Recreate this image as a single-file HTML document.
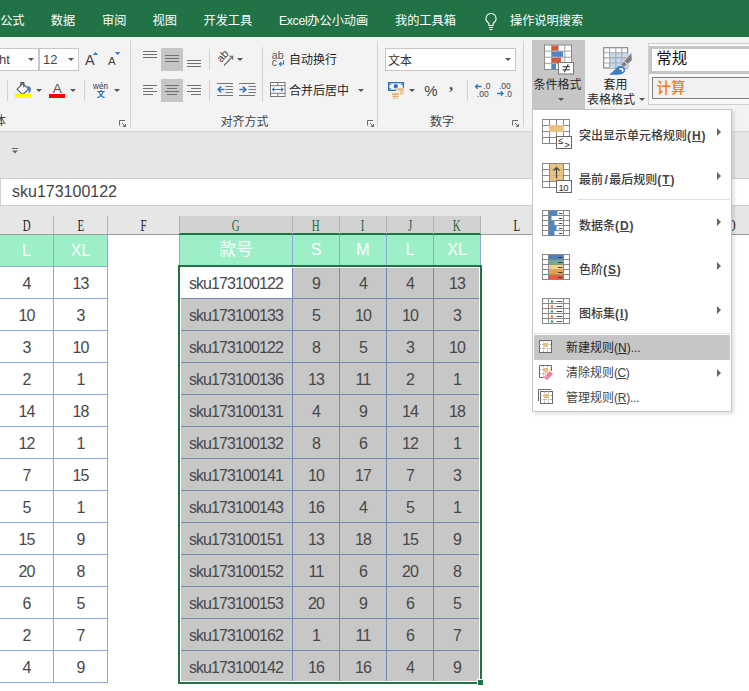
<!DOCTYPE html>
<html lang="zh-CN"><head><meta charset="utf-8"><title>Excel</title>
<style>
html,body{margin:0;padding:0}
body{width:749px;height:691px;position:relative;overflow:hidden;background:#fff;font-family:"Liberation Sans","Noto Sans CJK SC",sans-serif;color:#262626}
.a{position:absolute}
.t{position:absolute;white-space:nowrap}
.tab{position:absolute;top:11.300px;height:20px;line-height:20px;font-size:12.200px;color:#fff;white-space:nowrap}
.rl{position:absolute;font-size:12px;color:#262626;white-space:nowrap;line-height:16px}
.grp{position:absolute;font-size:12px;color:#444;white-space:nowrap;line-height:16px}
.vs{position:absolute;width:1px;background:#d2d2d2}
.ch{position:absolute;top:216px;height:18px;line-height:20px;text-align:center;font-family:"Liberation Serif","Noto Serif CJK SC",serif;font-size:16px;color:#222}
.ch span{display:inline-block;transform:scaleX(.68)}
.hd{position:absolute;top:235px;height:31px;line-height:31px;text-align:center;color:#fff;font-size:16px;background:#9cefc6}
.c{position:absolute;padding-top:.5px;height:32px;line-height:32px;text-align:center;font-size:16px;color:#484848;letter-spacing:-0.9px;white-space:nowrap}
.mi{position:absolute;left:579px;font-size:12px;font-weight:500;color:#3c3c3c;white-space:nowrap;line-height:16px}
.mi b{font-weight:bold;letter-spacing:.9px;color:#444}
.ms{position:absolute;left:566px;font-size:12px;color:#444;white-space:nowrap;line-height:16px}
.arr{position:absolute;width:0;height:0;border-left:4px solid #666;border-top:4px solid transparent;border-bottom:4px solid transparent}
.dd{position:absolute;width:0;height:0;border-top:3px solid #555;border-left:3px solid transparent;border-right:3px solid transparent}
u{text-decoration:underline}
</style></head><body>

<div class="a" style="left:0;top:0;width:749px;height:37px;background:#217346"></div>
<div class="tab" style="left:0.2px">公式</div>
<div class="tab" style="left:50.8px">数据</div>
<div class="tab" style="left:102px">审阅</div>
<div class="tab" style="left:152.5px">视图</div>
<div class="tab" style="left:203.5px">开发工具</div>
<div class="tab" style="left:279px"><span style="letter-spacing:-0.3px">Excel</span>办公小动画</div>
<div class="tab" style="left:395px">我的工具箱</div>
<div class="tab" style="left:510px">操作说明搜索</div>
<svg class="a" style="left:483px;top:12px" width="16" height="20" viewBox="0 0 16 20"><path d="M8 1.5a5 5 0 0 0-3 9c.6.6 1 1.300 1 2.200v.8h4v-.8c0-.9.4-1.600 1-2.200a5 5 0 0 0-3-9z" fill="none" stroke="#fff" stroke-width="1.100"/><path d="M6 15.500h4M6.500 17.500h3" stroke="#fff" stroke-width="1.100" fill="none"/></svg>
<div class="a" style="left:0;top:37px;width:749px;height:94px;background:#f3f3f3"></div>
<div class="a" style="left:0;top:131px;width:749px;height:48px;background:#e6e6e6"></div>
<div class="a" style="left:0;top:131px;width:749px;height:1px;background:#d6d6d6"></div>
<div class="a" style="left:-10px;top:48px;width:47px;height:21px;background:#fff;border:1px solid #c6c6c6;box-sizing:content-box"></div>
<div class="t" style="left:-1px;top:50.700px;font-size:13px;line-height:18px;color:#444">ht</div>
<div class="dd" style="left:28px;top:58px"></div>
<div class="a" style="left:39px;top:48px;width:38px;height:21px;background:#fff;border:1px solid #c6c6c6"></div>
<div class="t" style="left:43px;top:50.700px;font-size:13px;line-height:18px;color:#444">12</div>
<div class="dd" style="left:68px;top:58px"></div>
<div class="t" style="left:85px;top:51px;font-size:14.500px;line-height:18px;color:#444">A</div>
<svg class="a" style="left:92px;top:51px" width="8" height="5" viewBox="0 0 8 5"><path d="M0.800 4L3.500 1 6.200 4z" fill="#2b79c2"/></svg>
<div class="t" style="left:108px;top:53.300px;font-size:11.500px;line-height:16px;color:#444">A</div>
<svg class="a" style="left:114px;top:51px" width="8" height="5" viewBox="0 0 8 5"><path d="M0.800 1L3.600 4 6.400 1z" fill="#2b79c2"/></svg>
<div class="vs" style="left:7px;top:80px;height:21px"></div>
<svg class="a" style="left:14px;top:80px" width="20" height="20" viewBox="0 0 20 20"><path d="M13.200 5.800C16 6.500 17.600 8.500 16.800 10.500 16.300 12 15.300 13 14.300 13.600 15 11.500 15 9 13.200 5.800z" fill="#3d7ebf"/><path d="M3 9.300L8.700 3.600 14.600 9.200 8.700 14.500z" fill="#fff" stroke="#555" stroke-width="1.100"/><path d="M6.800 6V2.600h3V7.500" fill="none" stroke="#555" stroke-width="1.100"/><rect x="0.900" y="13.900" width="16.200" height="4" fill="#ffff00"/></svg>
<div class="dd" style="left:36px;top:89px"></div>
<div class="t" style="left:52.800px;top:80.300px;font-size:13.500px;line-height:18px;color:#555">A</div>
<div class="a" style="left:49px;top:94px;width:16px;height:3.500px;background:#ff0000"></div>
<div class="dd" style="left:70px;top:89px"></div>
<div class="vs" style="left:84px;top:80px;height:21px"></div>
<div class="t" style="left:93px;top:82px;font-size:8.200px;line-height:10px;color:#333">wén</div>
<div class="t" style="left:96.800px;top:88.600px;font-size:8.200px;line-height:12px;color:#2b6cb8;font-weight:bold">文</div>
<div class="dd" style="left:113.700px;top:89px"></div>
<div class="grp" style="left:-6px;top:113px">体</div>
<svg class="a" style="left:119px;top:120px" width="7" height="7" viewBox="0 0 7 7"><path d="M0.500 5.500V0.500H6" fill="none" stroke="#6a6a6a" stroke-width="1"/><path d="M3 3L6 6" fill="none" stroke="#6a6a6a" stroke-width="1"/><path d="M7 3.500V7H3.500z" fill="#6a6a6a"/></svg>
<div class="vs" style="left:130px;top:41px;height:86px"></div>
<div class="a" style="left:161px;top:48px;width:22px;height:23px;background:#c6c6c6"></div>
<div class="a" style="left:161px;top:79px;width:22px;height:23px;background:#c6c6c6"></div>
<div class="a" style="left:143px;top:51px;width:14px;height:1px;background:#707070"></div><div class="a" style="left:143px;top:54px;width:14px;height:1px;background:#707070"></div><div class="a" style="left:143px;top:57px;width:14px;height:1px;background:#707070"></div>
<div class="a" style="left:165px;top:55px;width:14px;height:1px;background:#707070"></div><div class="a" style="left:165px;top:58px;width:14px;height:1px;background:#707070"></div><div class="a" style="left:165px;top:61px;width:14px;height:1px;background:#707070"></div>
<div class="a" style="left:187px;top:60px;width:14px;height:1px;background:#707070"></div><div class="a" style="left:187px;top:63px;width:14px;height:1px;background:#707070"></div><div class="a" style="left:187px;top:66px;width:14px;height:1px;background:#707070"></div>
<div class="a" style="left:143px;top:85px;width:14px;height:1px;background:#707070"></div><div class="a" style="left:143px;top:88px;width:10px;height:1px;background:#707070"></div><div class="a" style="left:143px;top:91px;width:14px;height:1px;background:#707070"></div><div class="a" style="left:143px;top:94px;width:10px;height:1px;background:#707070"></div>
<div class="a" style="left:165.0px;top:85px;width:14px;height:1px;background:#707070"></div><div class="a" style="left:167.0px;top:88px;width:10px;height:1px;background:#707070"></div><div class="a" style="left:165.0px;top:91px;width:14px;height:1px;background:#707070"></div><div class="a" style="left:167.0px;top:94px;width:10px;height:1px;background:#707070"></div>
<div class="a" style="left:187px;top:85px;width:14px;height:1px;background:#707070"></div><div class="a" style="left:191px;top:88px;width:10px;height:1px;background:#707070"></div><div class="a" style="left:187px;top:91px;width:14px;height:1px;background:#707070"></div><div class="a" style="left:191px;top:94px;width:10px;height:1px;background:#707070"></div>
<div class="vs" style="left:209px;top:49px;height:21px"></div>
<div class="vs" style="left:209px;top:80px;height:21px"></div>
<svg class="a" style="left:214px;top:48px" width="22" height="20" viewBox="0 0 22 20"><text x="0" y="0" font-size="10.800" font-family="Liberation Sans,sans-serif" fill="#444" transform="translate(7.200 15) rotate(-48)">ab</text><path d="M10 17.500L18.500 8.500" stroke="#666" stroke-width="1.100" fill="none"/><path d="M15.300 8.300h3.400v3.400" fill="none" stroke="#666" stroke-width="1.100"/></svg>
<div class="dd" style="left:236.500px;top:58px"></div>
<svg class="a" style="left:217px;top:83px" width="18" height="15" viewBox="0 0 18 15"><path d="M0 0.500h16M8.500 3.500h7.500M8.500 6.500h7.500M8.500 9.500h7.500M0 12.500h16" stroke="#777" stroke-width="1" fill="none"/><path d="M1.200 6.500h6.300M4.200 3.500L1.200 6.500l3 3" stroke="#3b74ba" stroke-width="1.700" fill="none"/></svg>
<svg class="a" style="left:239px;top:83px" width="18" height="15" viewBox="0 0 18 15"><path d="M0 0.500h16M9.500 3.500h7.500M9.500 6.500h7.500M9.500 9.500h7.500M0 12.500h16" stroke="#777" stroke-width="1" fill="none"/><path d="M0.500 6.500h6.300M3.800 3.500l3 3-3 3" stroke="#3b74ba" stroke-width="1.700" fill="none"/></svg>
<div class="vs" style="left:262px;top:47px;height:55px"></div>
<div class="t" style="left:271.800px;top:49.500px;font-size:10.500px;line-height:10px;color:#555">ab</div>
<div class="t" style="left:271.800px;top:57.300px;font-size:10.500px;line-height:10px;color:#555">c</div>
<svg class="a" style="left:278px;top:60px" width="7" height="7" viewBox="0 0 7 7"><path d="M5.500 0.500v3.500H1.500M3.300 2L1.300 4l2 2" stroke="#2b79c2" stroke-width="1.100" fill="none"/></svg>
<div class="rl" style="left:289px;top:52px">自动换行</div>
<svg class="a" style="left:270px;top:82px" width="16" height="15" viewBox="0 0 16 15"><rect x="0.500" y="0.500" width="14.500" height="14" fill="#fff" stroke="#777"/><path d="M0.500 3.700h14.500M0.500 11.300h14.500M7.750 0.500v3.200M7.750 11.300v3.200" stroke="#777" fill="none"/><path d="M2.500 7.500h10.500M4.300 5.700L2.500 7.500l1.800 1.800M11.200 5.700l1.800 1.800-1.800 1.800" stroke="#3b74ba" stroke-width="1.100" fill="none"/></svg>
<div class="rl" style="left:289px;top:82.500px">合并后居中</div>
<div class="dd" style="left:358px;top:89px"></div>
<div class="grp" style="left:220.500px;top:114px">对齐方式</div>
<svg class="a" style="left:367px;top:120px" width="7" height="7" viewBox="0 0 7 7"><path d="M0.500 5.500V0.500H6" fill="none" stroke="#6a6a6a" stroke-width="1"/><path d="M3 3L6 6" fill="none" stroke="#6a6a6a" stroke-width="1"/><path d="M7 3.500V7H3.500z" fill="#6a6a6a"/></svg>
<div class="vs" style="left:377px;top:41px;height:86px"></div>
<div class="a" style="left:385px;top:48px;width:129px;height:21px;background:#fff;border:1px solid #c6c6c6"></div>
<div class="t" style="left:388px;top:52.500px;font-size:12px;line-height:16px;color:#333">文本</div>
<div class="dd" style="left:505px;top:58px"></div>
<svg class="a" style="left:387px;top:81px" width="18" height="18" viewBox="0 0 18 18"><rect x="1.700" y="1.700" width="14.700" height="7.600" fill="#fff" stroke="#3572b5" stroke-width="1.400"/><circle cx="8.800" cy="5.300" r="2.200" fill="#3572b5"/><path d="M2.400 2.400h1.800a1.800 1.800 0 0 1-1.800 1.800zM2.400 8.600v-1.800a1.800 1.800 0 0 1 1.800 1.800zM15.700 2.400v1.800a1.800 1.800 0 0 1-1.800-1.800z" fill="#3572b5"/><rect x="9.300" y="6.700" width="8.200" height="8" fill="#f3f3f3"/><rect x="4.500" y="11.300" width="8" height="6.500" fill="#f3f3f3"/><g fill="#e9b562"><rect x="10" y="7.300" width="7" height="2.300" rx="1.100"/><rect x="12.500" y="10.300" width="4.500" height="1.300" rx=".6"/><rect x="13" y="12.300" width="3.500" height="1.300" rx=".6"/><rect x="5" y="12" width="7" height="2.300" rx="1.100"/><rect x="5.200" y="14.800" width="6.600" height="1.200" rx=".6"/><rect x="5.800" y="16.400" width="5.400" height="1.200" rx=".6"/></g></svg>
<div class="dd" style="left:409px;top:89px"></div>
<div class="t" style="left:424.300px;top:81.800px;font-size:15px;line-height:18px;color:#444">%</div>
<div class="t" style="left:449px;top:74.500px;font-size:17px;line-height:20px;color:#555;font-family:'Liberation Serif',serif;font-weight:bold">,</div>
<div class="vs" style="left:467px;top:80px;height:21px"></div>
<svg class="a" style="left:474px;top:82px" width="17" height="17" viewBox="0 0 17 17"><text x="9.300" y="7.200" font-size="8.500" font-family="Liberation Sans,sans-serif" fill="#444">.0</text><text x="3" y="14.700" font-size="8.500" font-family="Liberation Sans,sans-serif" fill="#444">.00</text><path d="M1.500 4.500h6M3.700 2.300L1.500 4.500l2.200 2.200" stroke="#2b79c2" stroke-width="1.300" fill="none"/></svg>
<svg class="a" style="left:496px;top:82px" width="17" height="17" viewBox="0 0 17 17"><text x="3" y="7.200" font-size="8.500" font-family="Liberation Sans,sans-serif" fill="#444">.00</text><text x="8.800" y="14.700" font-size="8.500" font-family="Liberation Sans,sans-serif" fill="#444">.0</text><path d="M1 11.500h6M4.800 9.300l2.200 2.200-2.200 2.200" stroke="#2b79c2" stroke-width="1.300" fill="none"/></svg>
<div class="grp" style="left:430px;top:113.500px">数字</div>
<svg class="a" style="left:512px;top:120px" width="7" height="7" viewBox="0 0 7 7"><path d="M0.500 5.500V0.500H6" fill="none" stroke="#6a6a6a" stroke-width="1"/><path d="M3 3L6 6" fill="none" stroke="#6a6a6a" stroke-width="1"/><path d="M7 3.500V7H3.500z" fill="#6a6a6a"/></svg>
<div class="vs" style="left:523px;top:41px;height:86px"></div>
<div class="a" style="left:532px;top:40px;width:53px;height:70px;background:#c6c6c6"></div>
<svg class="a" style="left:544px;top:44px" width="32" height="32" viewBox="0 0 32 32">
<rect x="0.500" y="1" width="27" height="24.500" fill="#fff" stroke="#8a8a8a"/>
<path d="M0.500 7.100h27M0.500 13.200h27M0.500 19.300h27M7.500 1v24.500M14.300 1v24.500M20.800 1v24.500" stroke="#a0a0a0" fill="none"/>
<rect x="8" y="1.500" width="6" height="5.200" fill="#d9573b"/><rect x="8" y="7.600" width="11" height="5.200" fill="#4a86c8"/><rect x="8" y="13.700" width="9" height="5.200" fill="#d9573b"/><rect x="8" y="19.800" width="4" height="5.200" fill="#4a86c8"/>
<rect x="14.500" y="18.500" width="15" height="11.500" fill="#fff" stroke="#777"/>
<path d="M18.500 22.800h7.500M18.500 25.800h7.500M24.300 20.300l-4.100 8" stroke="#333" stroke-width="1.100" fill="none"/></svg>
<div class="rl" style="left:533.500px;top:77px">条件格式</div>
<div class="dd" style="left:557.700px;top:98px"></div>
<svg class="a" style="left:603px;top:47px" width="31" height="30" viewBox="0 0 31 30">
<rect x="0.700" y="0.700" width="24" height="20.300" fill="#fff" stroke="#8a8a8a" stroke-width="1.200"/>
<rect x="6.700" y="5.800" width="18" height="15.200" fill="#c5d9f1"/>
<path d="M0.700 5.800h24M0.700 10.900h24M0.700 16h24M6.700 0.700v20.300M12.800 0.700v20.300M18.800 0.700v20.300" stroke="#a8a8a8" stroke-width="1.100" fill="none"/>
<path d="M28.700 5.200l.5 8.200-8.400 7-3-2.800z" fill="#808080" stroke="#f3f3f3" stroke-width=".7"/><path d="M21.500 14.500l3.200 3.200" stroke="#f3f3f3" stroke-width="1"/><path d="M6.300 27.700C11 24 13 21 15.300 19.300 18.500 18.300 21.800 19.500 22.200 22.500 22.500 25.500 19 27.900 15 27.700z" fill="#3d7ebf"/><path d="M15.800 22.300C17 20.300 20.300 20.600 20.800 23l-1.200 2.600-1.200-2.800z" fill="#fff"/></svg>
<div class="rl" style="left:603.500px;top:77px">套用</div>
<div class="rl" style="left:587px;top:91.700px">表格格式</div>
<div class="dd" style="left:638.700px;top:98px"></div>
<div class="a" style="left:648px;top:43px;width:110px;height:60px;background:#f8f8f8;border:1px solid #d0d0d0"></div>
<div class="a" style="left:649px;top:46px;width:110px;height:22px;background:#fff;border:3px solid #c6c6c6"></div>
<div class="t" style="left:656.300px;top:48.800px;font-size:15.500px;line-height:20px;color:#111">常规</div>
<div class="a" style="left:652px;top:77px;width:110px;height:20px;background:#f2f2f2;border:1px solid #7f7f7f"></div>
<div class="t" style="left:656.500px;top:78px;font-size:14.400px;line-height:20px;color:#fa7d00;font-weight:500">计算</div>
<svg class="a" style="left:12px;top:148px" width="6" height="6" viewBox="0 0 6 6"><path d="M0 0.500h6" stroke="#666" stroke-width="1"/><path d="M0 2.500h6L3 5.500z" fill="#666"/></svg>
<div class="a" style="left:0;top:178px;width:760px;height:26px;background:#fff;border:1px solid #d0d0d0"></div>
<div class="t" style="left:12px;top:182px;font-size:16px;line-height:20px;color:#444">sku173100122</div>
<div class="a" style="left:0;top:206px;width:749px;height:28px;background:#e6e6e6"></div>
<div class="a" style="left:0;top:234px;width:749px;height:1px;background:#9b9b9b"></div>
<div class="a" style="left:180px;top:216px;width:301px;height:17px;background:#d2d2d2"></div>
<div class="a" style="left:179px;top:233px;width:302px;height:2px;background:#217346"></div>
<div class="ch" style="left:0px;width:53px;color:#222"><span>D</span></div>
<div class="a" style="left:53px;top:216px;width:1px;height:18px;background:#b4b4b4"></div>
<div class="ch" style="left:54px;width:53px;color:#222"><span>E</span></div>
<div class="a" style="left:107px;top:216px;width:1px;height:18px;background:#b4b4b4"></div>
<div class="ch" style="left:108px;width:71px;color:#222"><span>F</span></div>
<div class="a" style="left:179px;top:216px;width:1px;height:18px;background:#b4b4b4"></div>
<div class="ch" style="left:180px;width:112px;color:#1e6b41"><span>G</span></div>
<div class="a" style="left:292px;top:216px;width:1px;height:18px;background:#b4b4b4"></div>
<div class="ch" style="left:293px;width:46px;color:#1e6b41"><span>H</span></div>
<div class="a" style="left:339px;top:216px;width:1px;height:18px;background:#b4b4b4"></div>
<div class="ch" style="left:340px;width:46px;color:#1e6b41"><span>I</span></div>
<div class="a" style="left:386px;top:216px;width:1px;height:18px;background:#b4b4b4"></div>
<div class="ch" style="left:387px;width:46px;color:#1e6b41"><span>J</span></div>
<div class="a" style="left:433px;top:216px;width:1px;height:18px;background:#b4b4b4"></div>
<div class="ch" style="left:434px;width:46px;color:#1e6b41"><span>K</span></div>
<div class="a" style="left:480px;top:216px;width:1px;height:18px;background:#b4b4b4"></div>
<div class="ch" style="left:481px;width:71px;color:#222"><span>L</span></div>
<div class="a" style="left:552px;top:216px;width:1px;height:18px;background:#b4b4b4"></div>
<div class="ch" style="left:726px;width:10px;color:#222"><span>O</span></div>
<div class="hd" style="left:0;width:53px">L</div>
<div class="hd" style="left:54px;width:53px">XL</div>
<div class="c" style="left:0;top:267px;width:53px;height:31px;line-height:31px">4</div><div class="c" style="left:54px;top:267px;width:53px;height:31px;line-height:31px">13</div>
<div class="c" style="left:0;top:299px;width:53px;height:31px;line-height:31px">10</div><div class="c" style="left:54px;top:299px;width:53px;height:31px;line-height:31px">3</div>
<div class="c" style="left:0;top:331px;width:53px;height:31px;line-height:31px">3</div><div class="c" style="left:54px;top:331px;width:53px;height:31px;line-height:31px">10</div>
<div class="c" style="left:0;top:363px;width:53px;height:31px;line-height:31px">2</div><div class="c" style="left:54px;top:363px;width:53px;height:31px;line-height:31px">1</div>
<div class="c" style="left:0;top:395px;width:53px;height:31px;line-height:31px">14</div><div class="c" style="left:54px;top:395px;width:53px;height:31px;line-height:31px">18</div>
<div class="c" style="left:0;top:427px;width:53px;height:31px;line-height:31px">12</div><div class="c" style="left:54px;top:427px;width:53px;height:31px;line-height:31px">1</div>
<div class="c" style="left:0;top:459px;width:53px;height:31px;line-height:31px">7</div><div class="c" style="left:54px;top:459px;width:53px;height:31px;line-height:31px">15</div>
<div class="c" style="left:0;top:491px;width:53px;height:31px;line-height:31px">5</div><div class="c" style="left:54px;top:491px;width:53px;height:31px;line-height:31px">1</div>
<div class="c" style="left:0;top:523px;width:53px;height:31px;line-height:31px">15</div><div class="c" style="left:54px;top:523px;width:53px;height:31px;line-height:31px">9</div>
<div class="c" style="left:0;top:555px;width:53px;height:31px;line-height:31px">20</div><div class="c" style="left:54px;top:555px;width:53px;height:31px;line-height:31px">8</div>
<div class="c" style="left:0;top:587px;width:53px;height:31px;line-height:31px">6</div><div class="c" style="left:54px;top:587px;width:53px;height:31px;line-height:31px">5</div>
<div class="c" style="left:0;top:619px;width:53px;height:31px;line-height:31px">2</div><div class="c" style="left:54px;top:619px;width:53px;height:31px;line-height:31px">7</div>
<div class="c" style="left:0;top:651px;width:53px;height:31px;line-height:31px">4</div><div class="c" style="left:54px;top:651px;width:53px;height:31px;line-height:31px">9</div>
<div class="a" style="left:0;top:266px;width:108px;height:1px;background:#8ea9db"></div>
<div class="a" style="left:0;top:298px;width:108px;height:1px;background:#8ea9db"></div>
<div class="a" style="left:0;top:330px;width:108px;height:1px;background:#8ea9db"></div>
<div class="a" style="left:0;top:362px;width:108px;height:1px;background:#8ea9db"></div>
<div class="a" style="left:0;top:394px;width:108px;height:1px;background:#8ea9db"></div>
<div class="a" style="left:0;top:426px;width:108px;height:1px;background:#8ea9db"></div>
<div class="a" style="left:0;top:458px;width:108px;height:1px;background:#8ea9db"></div>
<div class="a" style="left:0;top:490px;width:108px;height:1px;background:#8ea9db"></div>
<div class="a" style="left:0;top:522px;width:108px;height:1px;background:#8ea9db"></div>
<div class="a" style="left:0;top:554px;width:108px;height:1px;background:#8ea9db"></div>
<div class="a" style="left:0;top:586px;width:108px;height:1px;background:#8ea9db"></div>
<div class="a" style="left:0;top:618px;width:108px;height:1px;background:#8ea9db"></div>
<div class="a" style="left:0;top:650px;width:108px;height:1px;background:#8ea9db"></div>
<div class="a" style="left:0;top:682px;width:108px;height:1px;background:#8ea9db"></div>
<div class="a" style="left:53px;top:235px;width:1px;height:448px;background:#8ea9db"></div>
<div class="a" style="left:107px;top:235px;width:1px;height:448px;background:#8ea9db"></div>
<div class="hd" style="left:180px;width:112px;height:30px;line-height:30px;font-size:16.800px">款号</div>
<div class="hd" style="left:293px;width:46px;height:30px;line-height:30px">S</div>
<div class="hd" style="left:340px;width:46px;height:30px;line-height:30px">M</div>
<div class="hd" style="left:387px;width:46px;height:30px;line-height:30px">L</div>
<div class="hd" style="left:434px;width:46px;height:30px;line-height:30px">XL</div>
<div class="a" style="left:181px;top:268px;width:298px;height:413px;background:#c7c7c7"></div>
<div class="a" style="left:180px;top:267px;width:112px;height:31px;background:#fff"></div>
<div class="a" style="left:179px;top:235px;width:1px;height:30px;background:#8ea9db"></div>
<div class="a" style="left:292px;top:235px;width:1px;height:30px;background:#8ea9db"></div>
<div class="a" style="left:339px;top:235px;width:1px;height:30px;background:#8ea9db"></div>
<div class="a" style="left:386px;top:235px;width:1px;height:30px;background:#8ea9db"></div>
<div class="a" style="left:433px;top:235px;width:1px;height:30px;background:#8ea9db"></div>
<div class="a" style="left:480px;top:235px;width:1px;height:30px;background:#8ea9db"></div>
<div class="a" style="left:292px;top:268px;width:1px;height:413px;background:#7488b4"></div>
<div class="a" style="left:339px;top:268px;width:1px;height:413px;background:#7488b4"></div>
<div class="a" style="left:386px;top:268px;width:1px;height:413px;background:#7488b4"></div>
<div class="a" style="left:433px;top:268px;width:1px;height:413px;background:#7488b4"></div>
<div class="a" style="left:181px;top:298px;width:298px;height:1px;background:#7488b4"></div>
<div class="a" style="left:181px;top:330px;width:298px;height:1px;background:#7488b4"></div>
<div class="a" style="left:181px;top:362px;width:298px;height:1px;background:#7488b4"></div>
<div class="a" style="left:181px;top:394px;width:298px;height:1px;background:#7488b4"></div>
<div class="a" style="left:181px;top:426px;width:298px;height:1px;background:#7488b4"></div>
<div class="a" style="left:181px;top:458px;width:298px;height:1px;background:#7488b4"></div>
<div class="a" style="left:181px;top:490px;width:298px;height:1px;background:#7488b4"></div>
<div class="a" style="left:181px;top:522px;width:298px;height:1px;background:#7488b4"></div>
<div class="a" style="left:181px;top:554px;width:298px;height:1px;background:#7488b4"></div>
<div class="a" style="left:181px;top:586px;width:298px;height:1px;background:#7488b4"></div>
<div class="a" style="left:181px;top:618px;width:298px;height:1px;background:#7488b4"></div>
<div class="a" style="left:181px;top:650px;width:298px;height:1px;background:#7488b4"></div>
<div class="c" style="left:180px;top:267px;width:112px;height:31px;line-height:31px">sku173100122</div>
<div class="c" style="left:293px;top:267px;width:46px;height:31px;line-height:31px">9</div>
<div class="c" style="left:340px;top:267px;width:46px;height:31px;line-height:31px">4</div>
<div class="c" style="left:387px;top:267px;width:46px;height:31px;line-height:31px">4</div>
<div class="c" style="left:434px;top:267px;width:46px;height:31px;line-height:31px">13</div>
<div class="c" style="left:180px;top:299px;width:112px;height:31px;line-height:31px">sku173100133</div>
<div class="c" style="left:293px;top:299px;width:46px;height:31px;line-height:31px">5</div>
<div class="c" style="left:340px;top:299px;width:46px;height:31px;line-height:31px">10</div>
<div class="c" style="left:387px;top:299px;width:46px;height:31px;line-height:31px">10</div>
<div class="c" style="left:434px;top:299px;width:46px;height:31px;line-height:31px">3</div>
<div class="c" style="left:180px;top:331px;width:112px;height:31px;line-height:31px">sku173100122</div>
<div class="c" style="left:293px;top:331px;width:46px;height:31px;line-height:31px">8</div>
<div class="c" style="left:340px;top:331px;width:46px;height:31px;line-height:31px">5</div>
<div class="c" style="left:387px;top:331px;width:46px;height:31px;line-height:31px">3</div>
<div class="c" style="left:434px;top:331px;width:46px;height:31px;line-height:31px">10</div>
<div class="c" style="left:180px;top:363px;width:112px;height:31px;line-height:31px">sku173100136</div>
<div class="c" style="left:293px;top:363px;width:46px;height:31px;line-height:31px">13</div>
<div class="c" style="left:340px;top:363px;width:46px;height:31px;line-height:31px">11</div>
<div class="c" style="left:387px;top:363px;width:46px;height:31px;line-height:31px">2</div>
<div class="c" style="left:434px;top:363px;width:46px;height:31px;line-height:31px">1</div>
<div class="c" style="left:180px;top:395px;width:112px;height:31px;line-height:31px">sku173100131</div>
<div class="c" style="left:293px;top:395px;width:46px;height:31px;line-height:31px">4</div>
<div class="c" style="left:340px;top:395px;width:46px;height:31px;line-height:31px">9</div>
<div class="c" style="left:387px;top:395px;width:46px;height:31px;line-height:31px">14</div>
<div class="c" style="left:434px;top:395px;width:46px;height:31px;line-height:31px">18</div>
<div class="c" style="left:180px;top:427px;width:112px;height:31px;line-height:31px">sku173100132</div>
<div class="c" style="left:293px;top:427px;width:46px;height:31px;line-height:31px">8</div>
<div class="c" style="left:340px;top:427px;width:46px;height:31px;line-height:31px">6</div>
<div class="c" style="left:387px;top:427px;width:46px;height:31px;line-height:31px">12</div>
<div class="c" style="left:434px;top:427px;width:46px;height:31px;line-height:31px">1</div>
<div class="c" style="left:180px;top:459px;width:112px;height:31px;line-height:31px">sku173100141</div>
<div class="c" style="left:293px;top:459px;width:46px;height:31px;line-height:31px">10</div>
<div class="c" style="left:340px;top:459px;width:46px;height:31px;line-height:31px">17</div>
<div class="c" style="left:387px;top:459px;width:46px;height:31px;line-height:31px">7</div>
<div class="c" style="left:434px;top:459px;width:46px;height:31px;line-height:31px">3</div>
<div class="c" style="left:180px;top:491px;width:112px;height:31px;line-height:31px">sku173100143</div>
<div class="c" style="left:293px;top:491px;width:46px;height:31px;line-height:31px">16</div>
<div class="c" style="left:340px;top:491px;width:46px;height:31px;line-height:31px">4</div>
<div class="c" style="left:387px;top:491px;width:46px;height:31px;line-height:31px">5</div>
<div class="c" style="left:434px;top:491px;width:46px;height:31px;line-height:31px">1</div>
<div class="c" style="left:180px;top:523px;width:112px;height:31px;line-height:31px">sku173100151</div>
<div class="c" style="left:293px;top:523px;width:46px;height:31px;line-height:31px">13</div>
<div class="c" style="left:340px;top:523px;width:46px;height:31px;line-height:31px">18</div>
<div class="c" style="left:387px;top:523px;width:46px;height:31px;line-height:31px">15</div>
<div class="c" style="left:434px;top:523px;width:46px;height:31px;line-height:31px">9</div>
<div class="c" style="left:180px;top:555px;width:112px;height:31px;line-height:31px">sku173100152</div>
<div class="c" style="left:293px;top:555px;width:46px;height:31px;line-height:31px">11</div>
<div class="c" style="left:340px;top:555px;width:46px;height:31px;line-height:31px">6</div>
<div class="c" style="left:387px;top:555px;width:46px;height:31px;line-height:31px">20</div>
<div class="c" style="left:434px;top:555px;width:46px;height:31px;line-height:31px">8</div>
<div class="c" style="left:180px;top:587px;width:112px;height:31px;line-height:31px">sku173100153</div>
<div class="c" style="left:293px;top:587px;width:46px;height:31px;line-height:31px">20</div>
<div class="c" style="left:340px;top:587px;width:46px;height:31px;line-height:31px">9</div>
<div class="c" style="left:387px;top:587px;width:46px;height:31px;line-height:31px">6</div>
<div class="c" style="left:434px;top:587px;width:46px;height:31px;line-height:31px">5</div>
<div class="c" style="left:180px;top:619px;width:112px;height:31px;line-height:31px">sku173100162</div>
<div class="c" style="left:293px;top:619px;width:46px;height:31px;line-height:31px">1</div>
<div class="c" style="left:340px;top:619px;width:46px;height:31px;line-height:31px">11</div>
<div class="c" style="left:387px;top:619px;width:46px;height:31px;line-height:31px">6</div>
<div class="c" style="left:434px;top:619px;width:46px;height:31px;line-height:31px">7</div>
<div class="c" style="left:180px;top:651px;width:112px;height:31px;line-height:31px">sku173100142</div>
<div class="c" style="left:293px;top:651px;width:46px;height:31px;line-height:31px">16</div>
<div class="c" style="left:340px;top:651px;width:46px;height:31px;line-height:31px">16</div>
<div class="c" style="left:387px;top:651px;width:46px;height:31px;line-height:31px">4</div>
<div class="c" style="left:434px;top:651px;width:46px;height:31px;line-height:31px">9</div>
<div class="a" style="left:178px;top:265px;width:300px;height:415px;border:2px solid #217346"></div>
<div class="a" style="left:477px;top:679px;width:5px;height:5px;background:#217346;border:1px solid #fff"></div>
<div class="a" style="left:532px;top:109px;width:198px;height:301px;background:#fff;border:1px solid #c6c6c6;box-shadow:1.500px 1.500px 4px rgba(0,0,0,.13)"></div>
<svg class="a" style="left:542px;top:119px" width="34" height="33" viewBox="0 0 34 33"><rect x="0.500" y="0.500" width="27" height="24" fill="#fff" stroke="#8a8a8a"/><path d="M7.5 0.500v24M14.5 0.500v24M21.5 0.500v24M0.500 6.5h27M0.500 12.5h27M0.500 18.5h27" stroke="#8a8a8a" fill="none"/><rect x="7" y="6" width="15" height="7" fill="#eac282"/><rect x="14.500" y="17.500" width="15" height="12" fill="#fff" stroke="#666"/><text x="16" y="25" font-size="9.500" font-family="Liberation Sans,sans-serif" fill="#222">≤</text><text x="22.300" y="28.800" font-size="9.500" font-family="Liberation Sans,sans-serif" fill="#222">&gt;</text></svg>
<div class="mi" style="top:127.500px">突出显示单元格规则<b>(<u>H</u>)</b></div>
<div class="arr" style="left:717px;top:128px"></div>
<svg class="a" style="left:542px;top:163px" width="34" height="33" viewBox="0 0 34 33"><rect x="0.500" y="0.500" width="27" height="24" fill="#fff" stroke="#8a8a8a"/><path d="M7.5 0.500v24M14.5 0.500v24M21.5 0.500v24M0.500 6.5h27M0.500 12.5h27M0.500 18.5h27" stroke="#8a8a8a" fill="none"/><rect x="8" y="1" width="13" height="17" fill="#eac282"/><path d="M8.500 6.500h12M8.500 12.500h12M14.500 0.500v18" stroke="#c9a25e" stroke-width=".5" fill="none"/><path d="M14.500 15V4.500M11.500 7.500l3-3 3 3" stroke="#444" stroke-width="1.200" fill="none"/><rect x="14.500" y="17.500" width="15" height="12" fill="#fff" stroke="#666"/><text x="16.500" y="27.500" font-size="9.500" font-family="Liberation Sans,sans-serif" fill="#333" letter-spacing="-0.500">10</text></svg>
<div class="mi" style="top:171.500px">最前<b style="padding:0 .6px 0 1.400px">/</b>最后规则<b>(<u>T</u>)</b></div>
<div class="arr" style="left:717px;top:172px"></div>
<div class="a" style="left:578px;top:199px;width:152px;height:1px;background:#e1e1e1"></div>
<svg class="a" style="left:542px;top:210px" width="34" height="34" viewBox="0 0 34 34"><rect x="0.500" y="0.500" width="27" height="25" fill="#fff" stroke="#8a8a8a"/><path d="M6.5 0.500v25M21.5 0.500v25M0.500 5.5h27M0.500 10.5h27M0.500 15.5h27M0.500 20.5h27" stroke="#8a8a8a" fill="none"/><rect x="7" y="1" width="8.5" height="4.500" fill="#4a86c8"/><rect x="17" y="3" width="3.300" height="1" fill="#444"/><rect x="7" y="6" width="2.5" height="4.500" fill="#4a86c8"/><rect x="17" y="8" width="3.300" height="1" fill="#444"/><rect x="7" y="11" width="5.5" height="4.500" fill="#4a86c8"/><rect x="17" y="13" width="3.300" height="1" fill="#444"/><rect x="7" y="16" width="7.5" height="4.500" fill="#4a86c8"/><rect x="17" y="18" width="3.300" height="1" fill="#444"/><rect x="7" y="21" width="5.5" height="4.500" fill="#4a86c8"/><rect x="17" y="23" width="3.300" height="1" fill="#444"/></svg>
<div class="mi" style="top:217.500px">数据条<b>(<u>D</u>)</b></div>
<div class="arr" style="left:717px;top:218px"></div>
<svg class="a" style="left:542px;top:254px" width="34" height="34" viewBox="0 0 34 34"><rect x="0.500" y="0.500" width="27" height="25" fill="#fff" stroke="#8a8a8a"/><path d="M6.5 0.500v25M21.5 0.500v25M0.500 5.5h27M0.500 10.5h27M0.500 15.5h27M0.500 20.5h27" stroke="#8a8a8a" fill="none"/><rect x="7" y="1" width="14" height="4.500" fill="#4a7ebb"/><rect x="16" y="3" width="4.500" height="1" fill="#444"/><rect x="7" y="6" width="14" height="4.500" fill="#76a797"/><rect x="16" y="8" width="4.500" height="1" fill="#444"/><rect x="7" y="11" width="14" height="4.500" fill="#f5d185"/><rect x="16" y="13" width="4.500" height="1" fill="#444"/><rect x="7" y="16" width="14" height="4.500" fill="#ec9a4c"/><rect x="16" y="18" width="4.500" height="1" fill="#444"/><rect x="7" y="21" width="14" height="4.500" fill="#e0603c"/><rect x="16" y="23" width="4.500" height="1" fill="#444"/></svg>
<div class="mi" style="top:261.500px">色阶<b>(<u>S</u>)</b></div>
<div class="arr" style="left:717px;top:262px"></div>
<svg class="a" style="left:542px;top:298px" width="34" height="34" viewBox="0 0 34 34"><rect x="0.500" y="0.500" width="27" height="25" fill="#fff" stroke="#8a8a8a"/><path d="M6.5 0.500v25M21.5 0.500v25M0.500 5.5h27M0.500 10.5h27M0.500 15.5h27M0.500 20.5h27" stroke="#8a8a8a" fill="none"/><circle cx="10" cy="3.5" r="1.300" fill="#3d9970"/><rect x="14.500" y="3" width="5.700" height="1" fill="#555"/><circle cx="10" cy="8.5" r="1.300" fill="#e8730c"/><rect x="14.500" y="8" width="5.700" height="1" fill="#555"/><circle cx="10" cy="13.5" r="1.300" fill="#3d9970"/><rect x="14.500" y="13" width="5.700" height="1" fill="#555"/><circle cx="10" cy="18.5" r="1.300" fill="#e8730c"/><rect x="14.500" y="18" width="5.700" height="1" fill="#555"/><circle cx="10" cy="23.5" r="1.300" fill="#3d9970"/><rect x="14.500" y="23" width="5.700" height="1" fill="#555"/></svg>
<div class="mi" style="top:305.500px">图标集<b>(<u>I</u>)</b></div>
<div class="arr" style="left:717px;top:306px"></div>
<div class="a" style="left:534px;top:333px;width:196px;height:1px;background:#e1e1e1"></div>
<div class="a" style="left:534px;top:335px;width:196px;height:25px;background:#c6c6c6"></div>
<svg class="a" style="left:539px;top:340px" width="14" height="14" viewBox="0 0 14 14"><rect x="0.500" y="0.500" width="12" height="12" fill="#fff" stroke="#6a6a6a"/><path d="M0.500 4.500h12M0.500 8.500h12M4.500 0.500v12M8.500 0.500v12" stroke="#b0b0b0" stroke-width="1" stroke-dasharray="1.500 1" fill="none"/><rect x="4" y="2.800" width="4.800" height="4.400" fill="#eac282"/></svg>
<div class="ms" style="top:339.500px;color:#262626">新建规则(<u>N</u>)...</div>
<svg class="a" style="left:539px;top:365px" width="16" height="17" viewBox="0 0 16 17"><rect x="0.500" y="0.500" width="12" height="12" fill="#fff" stroke="none"/><path d="M0.500 4.500h12M0.500 8.500h12M4.500 0.500v12M8.500 0.500v12" stroke="#b0b0b0" stroke-width="1" stroke-dasharray="1.500 1" fill="none"/><path d="M5 12.500H0.500V0.500H12.500V6" fill="none" stroke="#6a6a6a"/><rect x="4" y="3" width="4.800" height="4.400" fill="#eac282"/><path d="M10.500 5.700l4 3.200-6.300 6.700-3.800-3.200z" fill="#e8829a" stroke="#fff" stroke-width=".6"/><path d="M6.300 10.600l3.700 3.200" stroke="#f7c7d2" stroke-width=".8"/></svg>
<div class="ms" style="top:365px">清除规则<span style="letter-spacing:-0.45px">(<u>C</u>)</span></div>
<div class="arr" style="left:717px;top:369px"></div>
<svg class="a" style="left:538px;top:389px" width="16" height="16" viewBox="0 0 16 16"><path d="M0.500 12V0.500H13" fill="none" stroke="#6a6a6a"/><g transform="translate(2 2)"><rect x="0.500" y="0.500" width="12" height="12" fill="#fff" stroke="#6a6a6a"/><path d="M0.500 4.500h12M0.500 8.500h12M4.500 0.500v12M8.500 0.500v12" stroke="#b0b0b0" stroke-width="1" stroke-dasharray="1.500 1" fill="none"/><rect x="3.500" y="2.800" width="5.200" height="4.200" fill="#eac282"/></g></svg>
<div class="ms" style="top:389.500px">管理规则<span style="letter-spacing:-0.25px">(<u>R</u>)...</span></div>
</body></html>
